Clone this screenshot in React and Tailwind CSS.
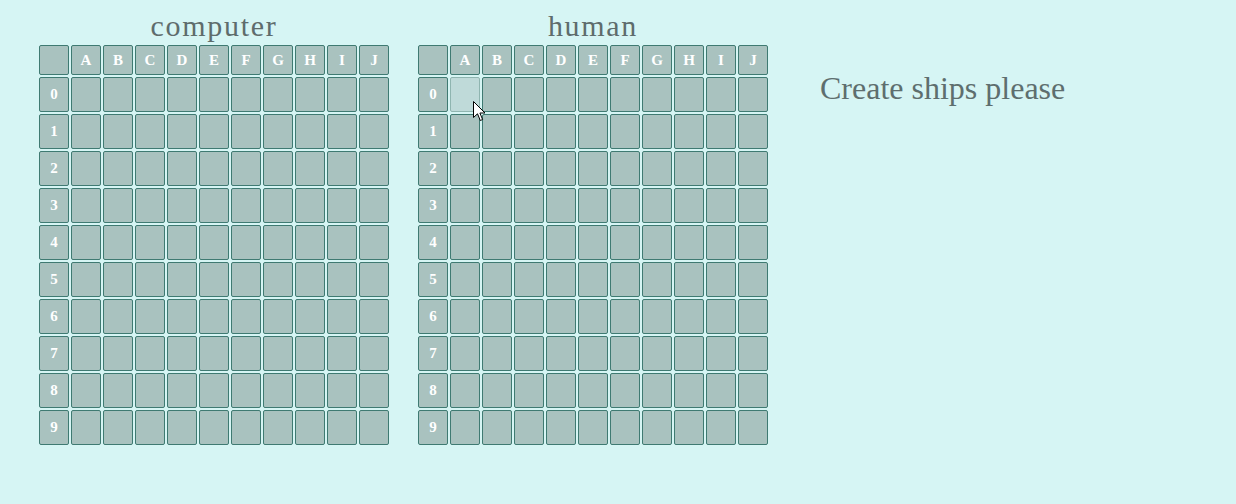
import React from "react";

const COLS = ["A", "B", "C", "D", "E", "F", "G", "H", "I", "J"];
const ROWS = [0, 1, 2, 3, 4, 5, 6, 7, 8, 9];

function Cursor() {
  return (
    <svg
      className="absolute left-[473px] top-[101px] pointer-events-none"
      width="13"
      height="21"
      viewBox="0 0 13 21"
    >
      <path
        d="M0.5 0.5 L0.5 16.5 L4.5 12.8 L7.3 19.5 L9.6 18.5 L6.9 12 L12 12 Z"
        fill="#fff"
        stroke="#000"
        strokeWidth="1"
        strokeLinejoin="round"
      />
    </svg>
  );
}

function Board({ title, hover }) {
  return (
    <div className="flex flex-col">
      <div className="h-[45px] flex items-end justify-center pb-[4px] text-[30px] leading-none tracking-[1.7px] text-[#5e6c6c]">
        {title}
      </div>
      <div className="relative grid grid-cols-[repeat(11,30px)] grid-rows-[30px_repeat(10,35px)] gap-[2px]">
        <div className="bg-[#a9c2bf] border border-[#3f7a72] rounded-[2px]" />
        {COLS.map((c) => (
          <div
            key={c}
            className="bg-[#a9c2bf] border border-[#3f7a72] rounded-[2px] flex items-center justify-center text-white font-bold text-[15px]"
          >
            {c}
          </div>
        ))}
        {ROWS.map((r) => (
          <React.Fragment key={r}>
            <div className="bg-[#a9c2bf] border border-[#3f7a72] rounded-[2px] flex items-center justify-center text-white font-bold text-[15px]">
              {r}
            </div>
            {COLS.map((c) =>
              hover && r === 0 && c === "A" ? (
                <div
                  key={c}
                  className="bg-[#bfdad9] border border-[#8fb5b0] rounded-[2px]"
                />
              ) : (
                <div
                  key={c}
                  className="bg-[#a9c2bf] border border-[#3f7a72] rounded-[2px]"
                />
              )
            )}
          </React.Fragment>
        ))}
      </div>
    </div>
  );
}

export default function App() {
  return (
    <div className="relative w-[1236px] h-[504px] bg-[#d6f5f4] overflow-hidden [font-family:'Liberation_Serif',serif]">
      <div className="flex items-start pl-[39px]">
        <Board title="computer" />
        <div className="w-[29px]" />
        <Board title="human" hover />
        <div className="pl-[52px] pt-[72px] text-[32px] text-[#5e6e6e] leading-none">
          Create ships please
        </div>
      </div>
      <Cursor />
    </div>
  );
}
